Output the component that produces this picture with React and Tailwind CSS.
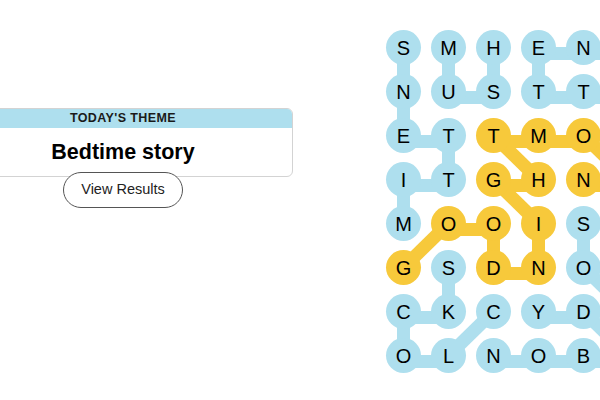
import React from "react";

const BLUE = "#aedfee";
const YELLOW = "#f7c93b";

// only the five columns that fit on screen; links still run to the sixth
const letters = [
  "SMHEN",
  "NUSTT",
  "ETTMO",
  "ITGHN",
  "MOOIS",
  "GSDNO",
  "CKCYD",
  "OLNOB",
];

const paths = [
  { color: BLUE, cells: [[4, 0], [3, 0], [3, 1], [2, 1], [2, 0], [1, 0], [0, 0]] },
  { color: BLUE, cells: [[0, 1], [1, 1], [1, 2], [0, 2]] },
  { color: BLUE, cells: [[2, 5], [1, 5], [1, 4], [1, 3], [0, 3], [0, 4], [0, 5]] },
  { color: BLUE, cells: [[6, 2], [7, 1], [7, 0], [6, 0], [6, 1], [5, 1]] },
  { color: BLUE, cells: [[7, 2], [7, 3], [7, 4], [7, 5], [6, 4], [6, 3]] },
  { color: BLUE, cells: [[4, 4], [5, 4], [6, 5], [5, 5], [4, 5]] },
  {
    color: YELLOW,
    cells: [[5, 0], [4, 1], [4, 2], [5, 2], [5, 3], [4, 3], [3, 2], [3, 3], [2, 2], [2, 3], [2, 4], [3, 5], [3, 4]],
  },
];

const cx = (c) => 17.5 + 45 * c;
const cy = (r) => 17.5 + 44 * r;

const fill = {};
paths.forEach((p) => p.cells.forEach(([r, c]) => (fill[r + "-" + c] = p.color)));

function Connectors() {
  const lines = [];
  paths.forEach((p, i) => {
    for (let k = 1; k < p.cells.length; k++) {
      const [r1, c1] = p.cells[k - 1];
      const [r2, c2] = p.cells[k];
      // horizontal links sit a little low, like the original
      const dy = r1 === r2 ? 6 : 0;
      lines.push(
        <line
          key={i + "-" + k}
          x1={cx(c1)}
          y1={cy(r1) + dy}
          x2={cx(c2)}
          y2={cy(r2) + dy}
          stroke={p.color}
          strokeWidth="13"
        />
      );
    }
  });
  return (
    <svg className="absolute left-0 top-0 overflow-visible" width="215" height="344">
      {lines}
    </svg>
  );
}

function Board() {
  return (
    <div className="relative shrink-0">
      <Connectors />
      <div className="relative grid grid-cols-[repeat(5,35px)] gap-x-[10px] gap-y-[9px]">
        {letters.map((row, r) =>
          row.split("").map((ch, c) => (
            <div
              key={r + "-" + c}
              className="w-[35px] h-[35px] rounded-full flex items-center justify-center text-[20px] text-black"
              style={{ backgroundColor: fill[r + "-" + c] || "transparent" }}
            >
              {ch}
            </div>
          ))
        )}
      </div>
    </div>
  );
}

function ThemeCard() {
  return (
    <div className="w-[340px] ml-[-47px] shrink-0 pt-[108px] flex flex-col items-center">
      <div className="w-full border border-[#d3d3d3] rounded-md overflow-hidden bg-white">
        <div className="bg-[#aedfee] h-[19px] flex items-center justify-center text-[12.5px] font-bold tracking-[0.4px] text-[#1a1a1a]">
          TODAY&apos;S THEME
        </div>
        <div className="h-[48px] flex items-center justify-center text-[21.5px] font-bold text-black">
          Bedtime story
        </div>
      </div>
      <button className="relative -mt-[5px] w-[120px] h-[36px] rounded-full border border-[#555] bg-white text-[14.5px] text-[#222]">
        View Results
      </button>
    </div>
  );
}

export default function App() {
  return (
    <div className="w-[600px] h-[400px] overflow-hidden bg-white flex font-['Liberation_Sans',Arial,sans-serif]">
      <ThemeCard />
      <div className="ml-[93px] pt-[30px]">
        <Board />
      </div>
    </div>
  );
}
